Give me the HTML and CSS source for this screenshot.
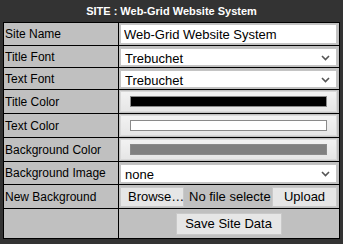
FILE: index.html
```html
<!DOCTYPE html>
<html>
<head>
<meta charset="utf-8">
<link rel="stylesheet" href="styles.css">
</head>
<body>
<div class="title">SITE : Web-Grid Website System</div>
<table class="form">
  <tr class="r-text">
    <td class="label">Site Name</td>
    <td class="value"><input class="txt" type="text" value="Web-Grid Website System"></td>
  </tr>
  <tr class="r-sel">
    <td class="label">Title Font</td>
    <td class="value"><div class="sel"><select><option>Trebuchet</option></select><svg class="chev" width="9" height="6" viewBox="0 0 9 6"><path d="M1 1 L4.5 4.5 L8 1" fill="none" stroke="#555" stroke-width="1.6"/></svg></div></td>
  </tr>
  <tr class="r-sel">
    <td class="label">Text Font</td>
    <td class="value"><div class="sel"><select><option>Trebuchet</option></select><svg class="chev" width="9" height="6" viewBox="0 0 9 6"><path d="M1 1 L4.5 4.5 L8 1" fill="none" stroke="#555" stroke-width="1.6"/></svg></div></td>
  </tr>
  <tr class="r-col">
    <td class="label">Title Color</td>
    <td class="value"><div class="colbox"><span class="swatch sw-black"></span></div></td>
  </tr>
  <tr class="r-col">
    <td class="label">Text Color</td>
    <td class="value"><div class="colbox"><span class="swatch sw-white"></span></div></td>
  </tr>
  <tr class="r-col">
    <td class="label">Background Color</td>
    <td class="value"><div class="colbox"><span class="swatch sw-gray"></span></div></td>
  </tr>
  <tr class="r-sel2">
    <td class="label">Background Image</td>
    <td class="value"><div class="sel"><select><option>none</option></select><svg class="chev" width="9" height="6" viewBox="0 0 9 6"><path d="M1 1 L4.5 4.5 L8 1" fill="none" stroke="#555" stroke-width="1.6"/></svg></div></td>
  </tr>
  <tr class="r-file">
    <td class="label">New Background</td>
    <td class="value">
      <div class="filerow">
        <button class="btn browse">Browse…</button>
        <span class="nofile">No file selecte</span>
        <button class="btn upload">Upload</button>
      </div>
    </td>
  </tr>
  <tr class="r-save">
    <td class="label"></td>
    <td class="value center"><button class="btn save">Save Site Data</button></td>
  </tr>
</table>
</body>
</html>
```
FILE: styles.css
```css
html, body {
  margin: 0;
  padding: 0;
  background: #333333;
  height: 244px;
  overflow: hidden;
  font-family: "Liberation Sans", Arial, sans-serif;
}
.title {
  color: #ffffff;
  font-weight: bold;
  font-size: 11px;
  text-align: center;
  height: 22px;
  line-height: 22px;
}
.form {
  margin: 0 3px;
  width: 337px;
  border-collapse: collapse;
  background: #c0c0c0;
  border: 1px solid #000;
}
.form td {
  border: 1px solid #000;
  padding: 1px 2px 1px 1px;
  vertical-align: middle;
}
.form td.label {
  width: 111px;
  font-size: 12px;
  color: #000;
}
.r-text td { height: 20px; }
.r-sel td { height: 19px; }
.r-col td { height: 21px; }
.r-sel2 td { height: 20px; }
.r-file td { height: 21px; }
.r-save td { height: 27px; }

.txt {
  display: block;
  box-sizing: border-box;
  width: 100%;
  height: 20px;
  margin: 0;
  border: 1px solid #c4c4c4;
  background: #fff;
  padding: 0 3px;
  font-family: "Liberation Sans", Arial, sans-serif;
  font-size: 13px;
  color: #000;
  outline: none;
}
.sel {
  position: relative;
  box-sizing: border-box;
  height: 18px;
  border: 1px solid #c4c4c4;
  background: #fff;
}
.r-sel2 .sel { height: 19px; }
.sel select {
  appearance: none;
  -webkit-appearance: none;
  border: 0;
  background: transparent;
  width: 100%;
  height: 100%;
  padding: 0 0 0 4px;
  margin: 0;
  font-family: "Liberation Sans", Arial, sans-serif;
  font-size: 13px;
  color: #000;
  outline: none;
}
.chev {
  position: absolute;
  right: 6px;
  top: 50%;
  margin-top: -2px;
}
.colbox {
  box-sizing: border-box;
  height: 21px;
  border: 1px solid #d8d8d8;
  background: linear-gradient(#f2f2f2, #e6e6e6);
  padding: 4px 9px;
  display: flex;
}
.swatch {
  flex: 1;
  border: 1px solid #8a8a8a;
}
.sw-black { background: #000; }
.sw-white { background: #fff; }
.sw-gray { background: #808080; }

.filerow {
  display: flex;
  align-items: center;
  gap: 5px;
}
.btn {
  box-sizing: border-box;
  height: 20px;
  margin: 0;
  border: 1px solid #c9c9c9;
  background: #e6e6e6;
  font-family: "Liberation Sans", Arial, sans-serif;
  font-size: 13px;
  color: #000;
  padding: 0 7px;
  border-radius: 0;
}
.browse { width: 64px; }
.nofile {
  font-size: 13px;
  color: #000;
  width: 78px;
  white-space: nowrap;
}
.upload { width: 65px; }
.center { text-align: center; }
.save { height: 22px; width: 106px; padding: 0; }
```
